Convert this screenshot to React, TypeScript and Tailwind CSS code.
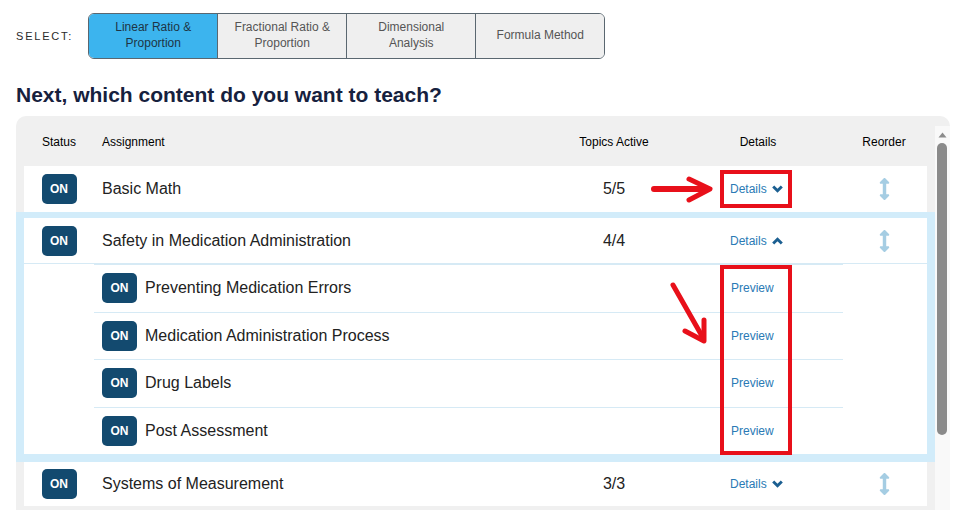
import React from "react";
import { FaArrowsAltV } from "react-icons/fa";

const font = { fontFamily: '"Liberation Sans", Arial, sans-serif' };

function OnBadge() {
  return (
    <div className="w-[35px] h-[30px] rounded-[5px] bg-[#134a6f] text-white text-[12px] font-bold flex items-center justify-center">
      ON
    </div>
  );
}

function Chevron({ up }: { up?: boolean }) {
  return (
    <svg width="11" height="8" viewBox="0 0 11 8">
      <polyline
        points={up ? "1.2,6.5 5.5,2.2 9.8,6.5" : "1.2,1.5 5.5,5.8 9.8,1.5"}
        fill="none"
        stroke="#1b5f91"
        strokeWidth="2.9"
        strokeLinecap="butt"
        strokeLinejoin="miter"
      />
    </svg>
  );
}

function DetailsLink({ open }: { open?: boolean }) {
  return (
    <div className="pl-[62px] flex items-center gap-[5px] text-[12px] text-[#2a7ab5]">
      <span>Details</span>
      <Chevron up={open} />
    </div>
  );
}

function Reorder() {
  return (
    <div className="flex justify-center">
      <FaArrowsAltV className="text-[#a5cde3] w-[11px] h-[22px]" />
    </div>
  );
}

function MainRow({ title, topics, open, h }: { title: string; topics: string; open?: boolean; h: string }) {
  return (
    <div className={`grid grid-cols-[70px_1fr_108px_180px_72px] pr-[7px] items-center bg-white ${h}`}>
      <div className="flex justify-center">
        <OnBadge />
      </div>
      <div className="pl-2 text-[16px] text-[#222]">{title}</div>
      <div className="text-center text-[16px] text-[#222]">{topics}</div>
      <DetailsLink open={open} />
      <Reorder />
    </div>
  );
}

function SubRow({ title }: { title: string }) {
  return (
    <div className="ml-[70px] w-[749px] h-[47.5px] border-t border-[#d6eaf5] flex items-center">
      <div className="w-[637px] flex items-center pl-2 gap-2">
        <OnBadge />
        <span className="text-[16px] text-[#222]">{title}</span>
      </div>
      <span className="text-[12px] text-[#2a7ab5]">Preview</span>
    </div>
  );
}

export default function App() {
  const tabs = [
    { label: ["Linear Ratio &", "Proportion"], active: true },
    { label: ["Fractional Ratio &", "Proportion"] },
    { label: ["Dimensional", "Analysis"] },
    { label: ["Formula Method"] },
  ];
  return (
    <div className="relative w-[961px] h-[510px] overflow-hidden bg-white" style={font}>
      <div className="flex items-center pl-4 pt-[13px]">
        <span className="text-[11px] tracking-[1.8px] text-[#2a2a2a]">SELECT:</span>
        <div className="ml-[15px] w-[517px] h-[46px] flex border border-[#5a6770] rounded-[6px] overflow-hidden">
          {tabs.map((t, i) => (
            <div
              key={i}
              className={`flex-1 flex flex-col items-center justify-center pb-[2px] text-[12px] leading-[16px] ${
                i > 0 ? "border-l border-[#5a6770]" : ""
              } ${t.active ? "bg-[#3cb4ee] text-[#1e3445]" : "bg-[#efefef] text-[#555]"}`}
            >
              {t.label.map((l) => (
                <span key={l}>{l}</span>
              ))}
            </div>
          ))}
        </div>
      </div>

      <h1 className="ml-4 mt-[24px] text-[21px] leading-[24px] font-bold text-[#16213e]">
        Next, which content do you want to teach?
      </h1>

      <div className="ml-4 mt-[9px] w-[934px] h-[400px] rounded-t-[10px] bg-[#f0f0f0] pt-[10px] flex">
        <div className="w-[919px]">
          <div className="grid grid-cols-[70px_1fr_108px_180px_72px] px-2 pr-[15px] h-[40px] pt-[9px] items-start leading-[14px] text-[12px] text-black">
            <div className="text-center">Status</div>
            <div className="pl-2">Assignment</div>
            <div className="text-center">Topics Active</div>
            <div className="text-center">Details</div>
            <div className="text-center">Reorder</div>
          </div>
          <div className="mx-2">
            <MainRow title="Basic Math" topics="5/5" h="h-[46px]" />
          </div>
          <div className="border-[#d2ecfa] border-x-8 border-t-[6px] border-b-8 bg-white">
            <div className="border-b border-[#d6eaf5]">
              <MainRow title="Safety in Medication Administration" topics="4/4" open h="h-[45px]" />
            </div>
            <SubRow title="Preventing Medication Errors" />
            <SubRow title="Medication Administration Process" />
            <SubRow title="Drug Labels" />
            <SubRow title="Post Assessment" />
          </div>
          <div className="mx-2">
            <MainRow title="Systems of Measurement" topics="3/3" h="h-[44px]" />
          </div>
        </div>
        <div className="w-[15px] bg-[#f9f9f9] flex flex-col pt-[6px]">
          <svg width="15" height="6" viewBox="0 0 15 6">
            <polygon points="3.5,5.5 11.5,5.5 7.5,0.5" fill="#8c8c8c" />
          </svg>
          <div className="ml-[2px] mt-[5px] w-[10px] h-[292px] rounded-[5px] bg-[#8a8a8a]" />
        </div>
      </div>

      <svg className="absolute inset-0 pointer-events-none" width="961" height="510" viewBox="0 0 961 510">
        <rect x="722" y="172" width="68" height="34" fill="none" stroke="#e8101a" strokeWidth="4" />
        <rect x="722" y="267" width="68" height="186" fill="none" stroke="#e8101a" strokeWidth="4" />
        <line x1="654" y1="189" x2="704" y2="189" stroke="#e8101a" strokeWidth="6" strokeLinecap="round" />
        <polyline points="689,179 710,189 689,200" fill="none" stroke="#e8101a" strokeWidth="5" strokeLinecap="round" strokeLinejoin="round" />
        <line x1="673" y1="285" x2="702" y2="336" stroke="#e8101a" strokeWidth="5" strokeLinecap="round" />
        <polyline points="685,331 704,341 704,320" fill="none" stroke="#e8101a" strokeWidth="5" strokeLinecap="round" strokeLinejoin="round" />
      </svg>
    </div>
  );
}
